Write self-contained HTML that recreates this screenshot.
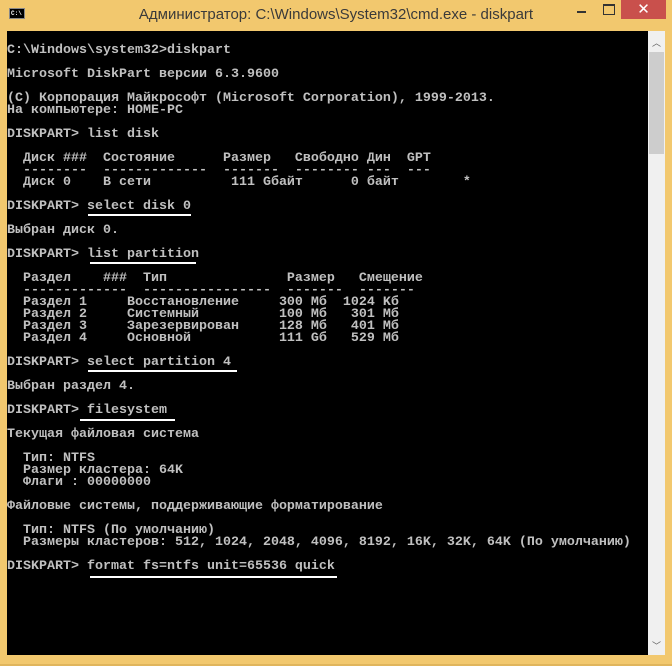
<!DOCTYPE html>
<html><head><meta charset="utf-8"><style>
*{margin:0;padding:0}
body{width:672px;height:666px;background:#f2c86e;position:relative;overflow:hidden;font-family:"Liberation Sans","DejaVu Sans",sans-serif}
.title{position:absolute;left:0;top:6px;width:672px;text-align:center;font-size:15px;color:#3a3a3a}
.icon{position:absolute;left:9px;top:8px;width:16px;height:11px;background:#000;border:1px solid #888;color:#fff;font:bold 6px "Liberation Mono",monospace;line-height:9px;padding-left:1px;box-sizing:border-box}
.min{position:absolute;left:577px;top:11px;width:9px;height:2px;background:#333}
.max{position:absolute;left:603px;top:4px;width:10px;height:8px;border:1px solid #333;border-top-width:2px}
.close{position:absolute;left:621px;top:0;width:45px;height:19px;background:#c9504c;color:#fff;text-align:center;font-size:15px;line-height:19px}
.con{position:absolute;left:7px;top:31px;width:641px;height:624px;background:#000}
.sb{position:absolute;left:648px;top:31px;width:17px;height:624px;background:#f0f0f0}
.thumb{position:absolute;left:1px;top:21px;width:15px;height:102px;background:#cdcdcd}
.ar{position:absolute;left:0;width:17px;text-align:center;color:#606060;font-size:9px}
pre{position:absolute;left:7px;top:45px;font:bold 13.33px/12px "Liberation Mono","DejaVu Sans Mono",monospace;color:#c0c0c0;letter-spacing:0}
.u{position:absolute;height:2px;background:#fff}
.bb{position:absolute;left:0;top:664px;width:672px;height:2px;background:#e0b55c}
</style></head><body>
<div class="icon">C:\</div>
<div class="title">Администратор: C:\Windows\System32\cmd.exe - diskpart</div>
<div class="min"></div><div class="max"></div>
<div class="close">✕</div>
<div class="con"></div>
<div class="sb"><div class="ar" style="top:5px">︿</div><div class="thumb"></div><div class="ar" style="top:608px">﹀</div></div>
<pre>C:\Windows\system32&gt;diskpart

Microsoft DiskPart версии 6.3.9600

(C) Корпорация Майкрософт (Microsoft Corporation), 1999-2013.
На компьютере: HOME-PC

DISKPART&gt; list disk

  Диск ###  Состояние      Размер   Свободно Дин  GPT
  --------  -------------  -------  -------- ---  ---
  Диск 0    В сети          111 Gбайт      0 байт        *

DISKPART&gt; select disk 0

Выбран диск 0.

DISKPART&gt; list partition

  Раздел    ###  Тип               Размер   Смещение
  -------------  ----------------  -------  -------
  Раздел 1     Восстановление     300 Mб  1024 Kб
  Раздел 2     Системный          100 Mб   301 Mб
  Раздел 3     Зарезервирован     128 Mб   401 Mб
  Раздел 4     Основной           111 Gб   529 Mб

DISKPART&gt; select partition 4

Выбран раздел 4.

DISKPART&gt; filesystem

Текущая файловая система

  Тип: NTFS
  Размер кластера: 64K
  Флаги : 00000000

Файловые системы, поддерживающие форматирование

  Тип: NTFS (По умолчанию)
  Размеры кластеров: 512, 1024, 2048, 4096, 8192, 16K, 32K, 64K (По умолчанию)

DISKPART&gt; format fs=ntfs unit=65536 quick</pre>
<div class="u" style="left:88px;top:214px;width:103px"></div>
<div class="u" style="left:90px;top:262px;width:106px"></div>
<div class="u" style="left:88px;top:370px;width:149px"></div>
<div class="u" style="left:80px;top:419px;width:95px"></div>
<div class="u" style="left:90px;top:576px;width:247px"></div>
<div class="bb"></div>
</body></html>
